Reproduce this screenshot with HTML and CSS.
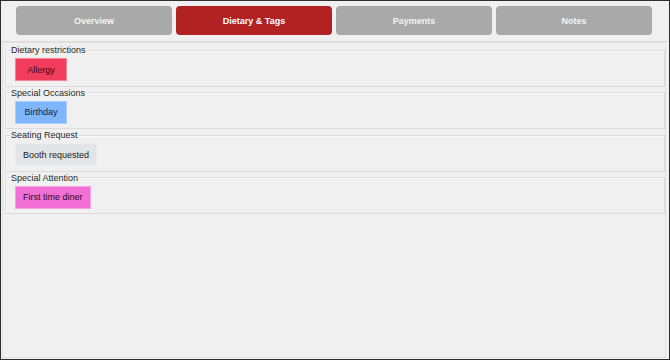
FILE: index.html
```html
<!DOCTYPE html>
<html>
<head>
<meta charset="utf-8">
<link rel="stylesheet" href="styles.css">
</head>
<body>
<div class="window">
  <nav class="tabs">
    <div class="tab">Overview</div>
    <div class="tab active">Dietary &amp; Tags</div>
    <div class="tab">Payments</div>
    <div class="tab">Notes</div>
  </nav>
  <main class="panel">
    <fieldset class="group">
      <legend>Dietary restrictions</legend>
      <div class="tags"><span class="tag allergy">Allergy</span></div>
    </fieldset>
    <fieldset class="group">
      <legend>Special Occasions</legend>
      <div class="tags"><span class="tag birthday">Birthday</span></div>
    </fieldset>
    <fieldset class="group">
      <legend>Seating Request</legend>
      <div class="tags"><span class="tag seating">Booth requested</span></div>
    </fieldset>
    <fieldset class="group">
      <legend>Special Attention</legend>
      <div class="tags"><span class="tag attention">First time diner</span></div>
    </fieldset>
  </main>
</div>
</body>
</html>
```
FILE: styles.css
```css
* { box-sizing: border-box; }
html, body { margin: 0; padding: 0; }
body {
  width: 670px;
  height: 360px;
  background: #f0f0f0;
  font-family: "Liberation Sans", Arial, sans-serif;
  font-size: 9px;
  color: #1e1e1e;
}
.window {
  width: 670px;
  height: 360px;
  border: 1px solid #2e2e2e;
  background: #f0f0f0;
  display: flex;
  flex-direction: column;
}
.tabs {
  display: flex;
  gap: 4px;
  height: 41px;
  padding: 5px 0 0 15px;
  border-bottom: 1px solid #dedede;
  box-shadow: 0 1px 0 #f8f8f8;
  flex-shrink: 0;
}
.tab {
  width: 156px;
  height: 29px;
  border-radius: 4px;
  background: #a9a9a9;
  color: #f4f4f4;
  font-weight: bold;
  font-size: 9px;
  display: flex;
  align-items: center;
  justify-content: center;
}
.tab.active {
  background: #b22222;
  color: #ffffff;
}
.panel {
  flex: 1;
  margin: 0 3px 1px 1px;
  border: 1px solid #e2e2e2;
  padding: 1px 0 0 2px;
}
.group {
  margin: 0;
  padding: 2px 8px 4.5px 5px;
  border: 1px solid #dcdcdc;
  box-shadow: inset 1px 1px 0 #fafafa;
  min-width: 0;
}
.group legend {
  padding: 0;
  line-height: 12px;
  font-size: 9px;
  color: #1e1e1e;
}
.tags {
  display: flex;
  padding-left: 4px;
}
.tag {
  min-width: 52px;
  height: 23px;
  padding: 0 7px;
  display: flex;
  align-items: center;
  justify-content: center;
  font-size: 9px;
  color: #1a1a1a;
  border: 1px solid rgba(255,255,255,0.35);
}
.allergy { background: #f23c5c; color: #3a0a12; }
.birthday { background: #7fb6fb; color: #15233a; }
.seating { background: #e3e4e6; color: #222; }
.attention { background: #f26fd6; color: #2a0a24; }
```
